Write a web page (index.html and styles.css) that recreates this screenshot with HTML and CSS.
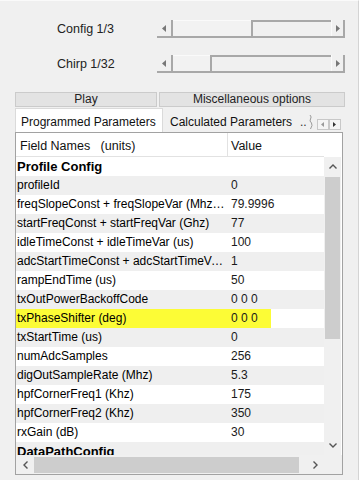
FILE: index.html
```html
<!DOCTYPE html>
<html lang="en">
<head>
    <meta charset="UTF-8">
    <meta name="viewport" content="width=device-width, initial-scale=1.0">
    <title>Profile Config</title>
    <link rel="stylesheet" href="styles.css">
</head>
<body>
<div class="window">
    <!-- config / chirp selectors -->
    <div class="sliders">
        <div class="slider-row">
            <span class="slider-label">Config 1/3</span>
            <div class="scrollbar">
                <span class="sb-btn sb-left"><svg width="4" height="7" viewBox="0 0 4 7"><path d="M4 0 L0 3.5 L4 7 Z" fill="#777"/></svg></span>
                <span class="sb-thumb" style="width:78px"></span>
                <span class="sb-track"></span>
                <span class="sb-btn sb-right"><svg width="4" height="7" viewBox="0 0 4 7"><path d="M0 0 L4 3.5 L0 7 Z" fill="#777"/></svg></span>
            </div>
        </div>
        <div class="slider-row">
            <span class="slider-label">Chirp 1/32</span>
            <div class="scrollbar">
                <span class="sb-btn sb-left"><svg width="4" height="7" viewBox="0 0 4 7"><path d="M4 0 L0 3.5 L4 7 Z" fill="#777"/></svg></span>
                <span class="sb-thumb" style="width:37px"></span>
                <span class="sb-track"></span>
                <span class="sb-btn sb-right"><svg width="4" height="7" viewBox="0 0 4 7"><path d="M0 0 L4 3.5 L0 7 Z" fill="#777"/></svg></span>
            </div>
        </div>
    </div>

    <div class="bar">
        <div class="bar-btn play">Play</div>
        <div class="bar-btn misc">Miscellaneous options</div>
    </div>

    <div class="tabs">
        <div class="tab active">Programmed Parameters</div>
        <div class="tab calc">Calculated Parameters</div>
        <div class="tab-more">..<svg width="4" height="14" viewBox="0 0 4 14"><path d="M1 0 Q3 2 1.5 4 Q0 6 2.5 8 Q4 10 1.5 14" stroke="#9a9a9a" fill="none"/></svg></div>
        <div class="tab-arrows">
            <span class="tab-arrow"><svg width="3" height="5" viewBox="0 0 3 5"><path d="M3 0 L0 2.5 L3 5 Z" fill="#999"/></svg></span>
            <span class="tab-arrow"><svg width="3" height="5" viewBox="0 0 3 5"><path d="M0 0 L3 2.5 L0 5 Z" fill="#333"/></svg></span>
        </div>
    </div>

    <div class="grid">
        <div class="grid-head">
            <div class="hcell hname">Field Names&nbsp;&nbsp;&nbsp;(units)</div>
            <div class="hcell hvalue">Value</div>
            <div class="hfill"></div>
        </div>
        <div class="grid-body">
            <div class="rows">
                <div class="row section"><div class="name">Profile Config</div><div class="value"></div></div>
                <div class="row"><div class="name">profileId</div><div class="value">0</div></div>
                <div class="row"><div class="name">freqSlopeConst + freqSlopeVar (Mhz/usec)</div><div class="value">79.9996</div></div>
                <div class="row"><div class="name">startFreqConst + startFreqVar (Ghz)</div><div class="value">77</div></div>
                <div class="row"><div class="name">idleTimeConst + idleTimeVar (us)</div><div class="value">100</div></div>
                <div class="row"><div class="name">adcStartTimeConst + adcStartTimeVar (us)</div><div class="value">1</div></div>
                <div class="row"><div class="name">rampEndTime (us)</div><div class="value">50</div></div>
                <div class="row"><div class="name">txOutPowerBackoffCode</div><div class="value">0 0 0</div></div>
                <div class="row marked"><div class="name">txPhaseShifter (deg)</div><div class="value">0 0 0</div></div>
                <div class="row"><div class="name">txStartTime (us)</div><div class="value">0</div></div>
                <div class="row"><div class="name">numAdcSamples</div><div class="value">256</div></div>
                <div class="row"><div class="name">digOutSampleRate (Mhz)</div><div class="value">5.3</div></div>
                <div class="row"><div class="name">hpfCornerFreq1 (Khz)</div><div class="value">175</div></div>
                <div class="row"><div class="name">hpfCornerFreq2 (Khz)</div><div class="value">350</div></div>
                <div class="row"><div class="name">rxGain (dB)</div><div class="value">30</div></div>
                <div class="row section"><div class="name">DataPathConfig</div><div class="value"></div></div>
            </div>
            <div class="vscroll">
                <span class="vbtn"><svg width="8" height="5" viewBox="0 0 8 5"><path d="M0.5 4.5 L4 1 L7.5 4.5" stroke="#555" stroke-width="1.4" fill="none"/></svg></span>
                <span class="vthumb"></span>
                <span class="vtrack"></span>
                <span class="vbtn"><svg width="8" height="5" viewBox="0 0 8 5"><path d="M0.5 0.5 L4 4 L7.5 0.5" stroke="#555" stroke-width="1.4" fill="none"/></svg></span>
            </div>
        </div>
        <div class="hscroll">
            <span class="hbtn"><svg width="5" height="8" viewBox="0 0 5 8"><path d="M4.5 0.5 L1 4 L4.5 7.5" stroke="#555" stroke-width="1.4" fill="none"/></svg></span>
            <span class="hthumb"></span>
            <span class="htrack"></span>
            <span class="hbtn"><svg width="5" height="8" viewBox="0 0 5 8"><path d="M0.5 0.5 L4 4 L0.5 7.5" stroke="#555" stroke-width="1.4" fill="none"/></svg></span>
            <span class="hcorner"></span>
        </div>
    </div>
</div>
</body>
</html>
```

FILE: styles.css
```css
body {
    margin: 0;
    background: #fff;
    font-family: "Liberation Sans", Arial, sans-serif;
    font-size: 12px;
    color: #000;
}
.window {
    width: 359px;
    height: 480px;
    box-sizing: border-box;
    background: #f0f0f0;
    border-top: 1px solid #fafafa;
    border-right: 1px solid #d4d4d4;
    padding: 19px 0 0 15px;
}

/* selectors at the top */
.sliders {
    display: flex;
    flex-direction: column;
    gap: 17px;
}
.slider-row {
    display: flex;
    align-items: center;
    height: 18px;
}
.slider-label {
    width: 100px;
    padding-left: 42px;
    font-size: 12.5px;
    color: #222;
}
.scrollbar {
    display: flex;
    width: 188px;
    height: 18px;
    box-sizing: border-box;
    border-bottom: 2px solid #a8a8a8;
}
.sb-btn {
    width: 16px;
    display: flex;
    align-items: center;
    justify-content: center;
    box-sizing: border-box;
}
.sb-left {
    border-right: 2px solid #a8a8a8;
}
.sb-right {
    width: 14px;
    border-right: 2px solid #a8a8a8;
    border-left: 1px solid #fafafa;
}
.sb-thumb {
    border-top: 1px solid #fafafa;
    background: #f2f2f2;
}
.sb-track {
    flex: 1;
    border-top: 2px solid #a8a8a8;
    border-left: 2px solid #a8a8a8;
    background: #f0f0f0;
}

/* play / misc bar */
.bar {
    display: flex;
    gap: 2px;
    margin-top: 19px;
    width: 330px;
    height: 15px;
}
.bar-btn {
    box-sizing: border-box;
    background: #e3e3e3;
    border: 1px solid #cbcbcb;
    text-align: center;
    line-height: 13px;
    font-size: 12px;
    color: #222;
}
.play {
    width: 142px;
}
.misc {
    flex: 1;
}

/* tab strip */
.tabs {
    display: flex;
    align-items: flex-end;
    height: 24px;
    margin-top: 1px;
    font-size: 12px;
    white-space: nowrap;
}
.tab {
    height: 21px;
    line-height: 21px;
    box-sizing: border-box;
    color: #111;
}
.tab.active {
    height: 24px;
    line-height: 26px;
    width: 148px;
    padding-left: 5px;
    background: #fff;
    border: 1px solid #dadada;
    border-bottom: none;
}
.tab.calc {
    width: 137px;
    padding-left: 7px;
    line-height: 22px;
}
.tab-more {
    display: flex;
    align-items: center;
    height: 21px;
    gap: 2px;
    color: #333;
}
.tab-arrows {
    display: flex;
    align-self: flex-start;
    margin: 11px 0 0 4px;
}
.tab-arrow {
    width: 12px;
    height: 11px;
    box-sizing: border-box;
    border: 1px solid #c8c8c8;
    background: #f4f4f4;
    display: flex;
    align-items: center;
    justify-content: center;
}

/* parameter grid */
.grid {
    width: 328px;
    height: 343px;
    box-sizing: border-box;
    border: 1px solid #a2a2a2;
    background: #fff;
    display: flex;
    flex-direction: column;
}
.grid-head {
    display: flex;
    height: 24px;
    font-size: 12.5px;
    color: #111;
}
.hcell {
    box-sizing: border-box;
    border-bottom: 1px solid #e2e2e2;
    line-height: 26px;
    white-space: pre;
}
.hname {
    width: 212px;
    padding-left: 4px;
    border-right: 1px solid #e2e2e2;
}
.hvalue {
    width: 96px;
    padding-left: 3px;
}
.hfill {
    flex: 1;
}
.grid-body {
    display: flex;
    height: 298px;
}
.rows {
    width: 308px;
    overflow: hidden;
}
.row {
    display: flex;
    height: 19px;
    line-height: 19px;
    background: #fff;
}
.row:nth-child(even) {
    background: #efefef;
}
.name {
    width: 212px;
    padding: 0 2px 0 1px;
    box-sizing: border-box;
    white-space: nowrap;
    overflow: hidden;
    text-overflow: ellipsis;
}
.value {
    flex: 1;
    padding-left: 3px;
    color: #1a1a1a;
}
.section .name {
    font-weight: bold;
    font-size: 13px;
}
.row.marked .name {
    background: #fcfc36;
}
.row.marked .value {
    background: linear-gradient(to right, #fcfc36 43px, transparent 43px);
}

/* scrollbars of the grid */
.vscroll {
    width: 17px;
    display: flex;
    flex-direction: column;
    background: #f0f0f0;
}
.vbtn {
    height: 19px;
    display: flex;
    align-items: center;
    justify-content: center;
}
.vthumb {
    height: 162px;
    margin: 1px 1px 0;
    background: #cdcdcd;
}
.vtrack {
    flex: 1;
}
.hscroll {
    display: flex;
    height: 19px;
    background: #f0f0f0;
}
.hbtn {
    width: 18px;
    display: flex;
    align-items: center;
    justify-content: center;
}
.hthumb {
    width: 265px;
    margin: 2px 0 1px;
    background: #cdcdcd;
}
.htrack {
    width: 7px;
}
.hcorner {
    width: 17px;
    background: #f0f0f0;
}
```
